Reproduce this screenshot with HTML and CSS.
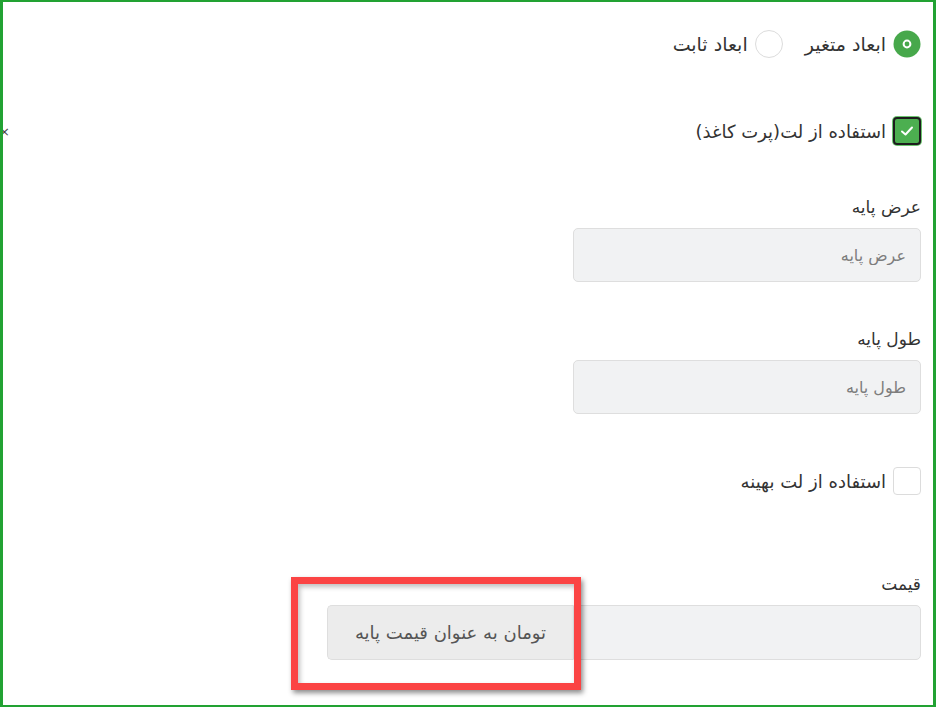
FILE: index.html
```html
<!DOCTYPE html>
<html lang="fa" dir="rtl">

<head>
    <meta charset="UTF-8">
    <meta name="viewport" content="width=device-width, initial-scale=1.0">
    <title>ابعاد محصول</title>
    <link rel="stylesheet" href="styles.css">
</head>

<body>

    <div class="frame">
        <span class="edge-mark">×</span>

        <div class="form">
            <div class="radio-row">
                <label class="option">
                    <span class="radio checked">
                        <svg width="28" height="28" viewBox="0 0 28 28">
                            <circle cx="14" cy="14" r="13.5" fill="#47a84b" />
                            <circle cx="14" cy="14" r="3.4" fill="none" stroke="#fff" stroke-width="2" />
                        </svg>
                    </span>
                    ابعاد متغیر
                </label>
                <label class="option">
                    <span class="radio"></span>
                    ابعاد ثابت
                </label>
            </div>

            <label class="option check-row first-check">
                <span class="checkbox checked">
                    <svg width="16" height="16" viewBox="0 0 16 16">
                        <path d="M3 8.5 L6.5 11.5 L13 4.5" fill="none" stroke="#fff" stroke-width="2" stroke-linecap="round" stroke-linejoin="round" />
                    </svg>
                </span>
                استفاده از لت(پرت کاغذ)
            </label>

            <div class="field field-width">
                <label class="field-label">عرض پایه</label>
                <input type="text" class="field-input" placeholder="عرض پایه">
            </div>

            <div class="field field-length">
                <label class="field-label">طول پایه</label>
                <input type="text" class="field-input" placeholder="طول پایه">
            </div>

            <label class="option check-row second-check">
                <span class="checkbox"></span>
                استفاده از لت بهینه
            </label>

            <div class="field field-price">
                <label class="field-label">قیمت</label>
                <div class="input-group">
                    <input type="text" class="field-input group-input">
                    <span class="addon">تومان به عنوان قیمت پایه</span>
                </div>
            </div>
        </div>

        <div class="highlight"></div>
    </div>

</body>

</html>
```

FILE: styles.css
```css
* {
    box-sizing: border-box;
}

body {
    margin: 0;
    font-family: "DejaVu Sans", "Noto Sans", sans-serif;
    color: #333;
    background: #fff;
}

.frame {
    position: relative;
    width: 936px;
    height: 707px;
    border-style: solid;
    border-color: #22a233;
    border-width: 2px 3px 2px 3px;
    overflow: hidden;
}

.edge-mark {
    position: absolute;
    left: -4px;
    top: 122px;
    font-size: 13px;
    color: #444;
}

.form {
    padding: 28px 12px 0 0;
}

.radio-row {
    display: flex;
    align-items: center;
    gap: 22px;
    height: 28px;
}

.option {
    display: flex;
    align-items: center;
    gap: 7px;
    font-size: 18px;
    color: #333;
    height: 28px;
}

.radio-row .option {
    font-size: 19px;
}

.radio {
    width: 28px;
    height: 28px;
    border-radius: 50%;
    border: 1px solid #dcdcdc;
    background: #fff;
    flex-shrink: 0;
}

.radio.checked {
    border: none;
}

.radio svg {
    display: block;
}

.check-row {
    margin-top: 59px;
}

.checkbox {
    width: 28px;
    height: 28px;
    border: 1px solid #dcdcdc;
    border-radius: 4px;
    background: #fff;
    flex-shrink: 0;
    display: flex;
    align-items: center;
    justify-content: center;
}

.checkbox.checked {
    background: #4caf50;
    border: 2px solid #1d1d1d;
    box-shadow: 0 0 0 1px #6cc46f;
}

.field {
    display: flex;
    flex-direction: column;
    align-items: flex-start;
}

.field-width {
    margin-top: 50px;
}

.field-length {
    margin-top: 45px;
}

.second-check {
    margin-top: 53px;
}

.field-price {
    margin-top: 77px;
}

.field-label {
    font-size: 17px;
    line-height: 24px;
    color: #333;
    margin-bottom: 9px;
}

.field-input {
    width: 348px;
    height: 54px;
    background: #f1f2f3;
    border: 1px solid #dedede;
    border-radius: 5px;
    padding: 0 14px;
    font-family: inherit;
    font-size: 16px;
    color: #555;
}

.field-input::placeholder {
    color: #7d7d7d;
}

.input-group {
    display: flex;
    height: 55px;
}

.group-input {
    height: 55px;
    border-radius: 0 5px 5px 0;
}

.addon {
    width: 246px;
    display: flex;
    align-items: center;
    justify-content: center;
    background: #ececec;
    border: 1px solid #dedede;
    border-right: none;
    border-radius: 5px 0 0 5px;
    font-size: 18px;
    color: #555;
}

.highlight {
    position: absolute;
    left: 288px;
    top: 575px;
    width: 290px;
    height: 113px;
    border: 7px solid #fb4444;
    box-shadow: 2px 3px 5px rgba(0, 0, 0, 0.45), inset 2px 3px 5px rgba(0, 0, 0, 0.25);
}
```
